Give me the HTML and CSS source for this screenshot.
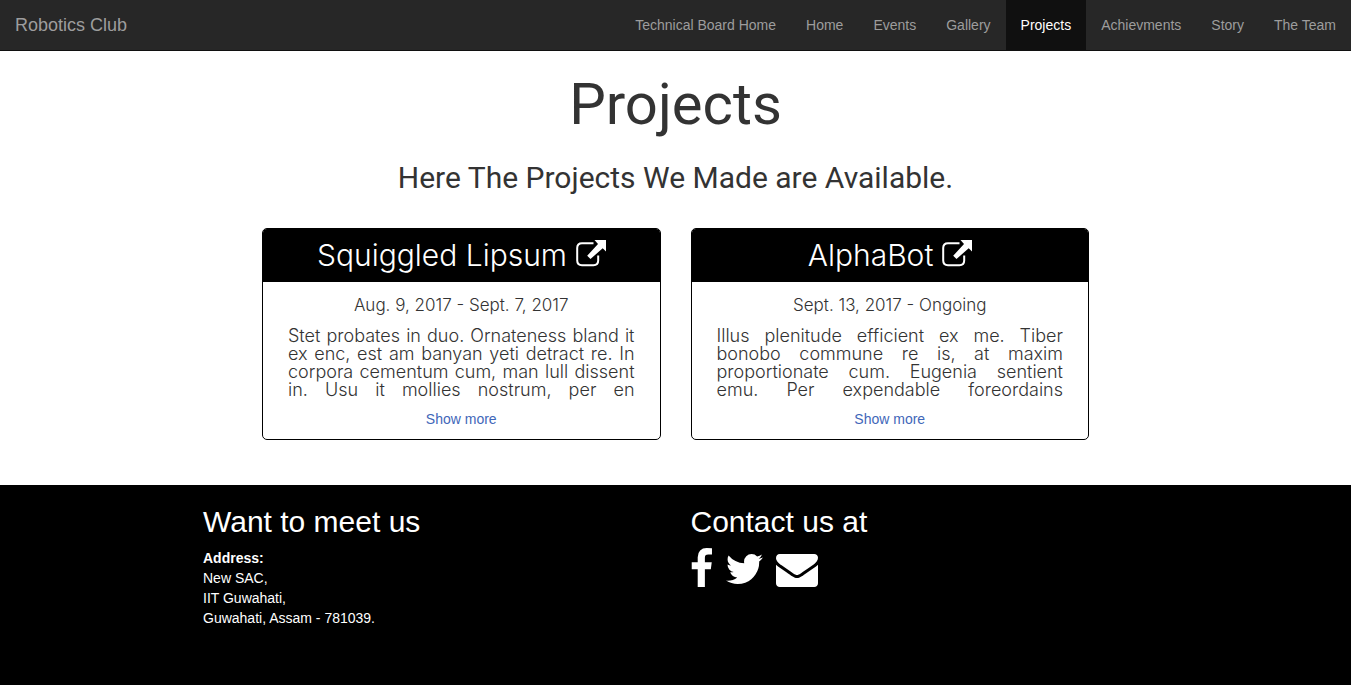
FILE: index.html
```html
<!DOCTYPE html>
<html lang="en">
<head>
<meta charset="utf-8">
<meta name="viewport" content="width=device-width, initial-scale=1">
<title>Projects - Robotics Club</title>
<link rel="stylesheet" href="styles.css">
</head>
<body>
<svg class="sprite" aria-hidden="true">
  <symbol id="new-window" viewBox="0 0 30 27">
    <path d="M17.5 3.2H6Q1.200 3.200 1.200 8v12.500Q1.200 25.200 6 25.200h11.500q4.700 0 4.700-4.700V15.500" fill="none" stroke="currentColor" stroke-width="2"/>
    <path d="M18.500 0H30V11.500l-3.300-3.300L14.500 19l-3.300-3.300L22 4z" fill="currentColor"/>
  </symbol>
</svg>
<nav class="navbar">
  <a class="brand" href="#">Robotics Club</a>
  <ul class="menu">
    <li><a href="#">Technical Board Home</a></li>
    <li><a href="#">Home</a></li>
    <li><a href="#">Events</a></li>
    <li><a href="#">Gallery</a></li>
    <li><a class="active" href="#" aria-current="page">Projects</a></li>
    <li><a href="#">Achievments</a></li>
    <li><a href="#">Story</a></li>
    <li><a href="#">The Team</a></li>
  </ul>
</nav>
<main>
  <h1 class="title">Projects</h1>
  <h2 class="subtitle">Here The Projects We Made are Available.</h2>
  <div class="cards">
    <article class="card">
      <h3 class="card-title"><a href="#">Squiggled Lipsum <svg class="open-icon" aria-hidden="true"><use href="#new-window"/></svg></a></h3>
      <div class="card-body">
        <p class="dates">Aug. 9, 2017 - Sept. 7, 2017</p>
        <p class="summary">Stet probates in duo. Ornateness bland it<br>ex enc, est am banyan yeti detract re. In<br>corpora cementum cum, man lull dissent<br>in. Usu it mollies nostrum, per en</p>
        <a class="more" href="#">Show more</a>
      </div>
    </article>
    <article class="card">
      <h3 class="card-title"><a href="#">AlphaBot <svg class="open-icon" aria-hidden="true"><use href="#new-window"/></svg></a></h3>
      <div class="card-body">
        <p class="dates">Sept. 13, 2017 - Ongoing</p>
        <p class="summary">Illus plenitude efficient ex me. Tiber<br>bonobo commune re is, at maxim<br>proportionate cum. Eugenia sentient<br>emu. Per expendable foreordains</p>
        <a class="more" href="#">Show more</a>
      </div>
    </article>
  </div>
</main>
<footer class="footer">
  <div class="footer-inner">
    <section>
      <h2 class="footer-title">Want to meet us</h2>
      <address class="address"><strong>Address:</strong><br>New SAC,<br>IIT Guwahati,<br>Guwahati, Assam - 781039.</address>
    </section>
    <section>
      <h2 class="footer-title">Contact us at</h2>
      <div class="social">
        <a href="#" aria-label="Facebook"><svg viewBox="64 0 960 1792"><path d="M959 12v264h-157q-86 0-116 36t-30 108v189h293l-39 296h-254v759h-306v-759h-255v-296h255v-218q0-186 104-288.500t277-102.500q147 0 228 12z"/></svg></a>
        <a href="#" aria-label="Twitter"><svg viewBox="64 0 1664 1792"><path d="M1684 408q-67 98-162 167 1 14 1 42 0 130-38 259.500t-115.500 248.500-184.500 210.500-258 146-323 54.500q-271 0-496-145 35 4 78 4 225 0 401-138-105-2-188-64.500t-114-159.500q33 5 61 5 43 0 85-11-112-23-185.500-111.500t-73.500-205.500v-4q68 38 146 41-66-44-105-115t-39-154q0-88 44-163 121 149 294.500 238.500t371.500 99.500q-8-38-8-74 0-134 94.500-228.500t228.500-94.500q140 0 236 102 109-21 205-78-37 115-142 178 93-10 186-50z"/></svg></a>
        <a href="#" aria-label="Email"><svg viewBox="0 0 1792 1792"><path d="M1792 710v794q0 66-47 113t-113 47h-1472q-66 0-113-47t-47-113v-794q44 49 101 87 362 246 497 345 57 42 92.500 65.500t94.500 48 110 24.500h2q51 0 110-24.500t94.500-48 92.500-65.500q170-123 498-345 57-39 100-87zm0-294q0 79-49 151t-122 123q-376 261-468 325-10 7-42.500 31t-54 38.800-52 32.500-57.500 27-50 9h-2q-23 0-50-9t-57.500-27-52-32.500-54-38.800-42.500-31q-91-64-262-182.500t-205-142.500q-62-42-117-115.500t-55-136.500q0-78 41.500-130t118.500-52h1472q65 0 112.500 47t47.500 113z"/></svg></a>
      </div>
    </section>
  </div>
</footer>
</body>
</html>
```
FILE: styles.css
```css
* { box-sizing: border-box; }

body {
  margin: 0;
  min-height: 100vh;
  display: flex;
  flex-direction: column;
  font: 14px/20px "Liberation Sans", Arial, sans-serif;
  color: #333;
  background: #fff;
}

a { color: inherit; text-decoration: none; }
h1, h2, h3, p { margin: 0; font-weight: 400; }
.sprite { display: none; }

.navbar {
  display: flex;
  justify-content: space-between;
  background: #272727;
  border-bottom: 1px solid #101010;
  color: #9d9d9d;
}
.brand { padding: 15px; font-size: 18px; }
.menu { display: flex; margin: 0; padding: 0; list-style: none; }
.menu a { display: block; padding: 15px; }
.menu .active { background: #101010; color: #fff; }

.title, .subtitle {
  font-family: Roboto, sans-serif;
  text-align: center;
}
.title { margin-top: 20px; font-size: 58px; line-height: 66px; }
.subtitle { margin-top: 24px; font-size: 30px; line-height: 34px; }

.cards {
  display: grid;
  grid-template-columns: 1fr 1fr;
  gap: 30px;
  width: 100%;
  max-width: 827px;
  margin: 33px auto 45px;
}
.card {
  border: 1px solid #000;
  border-radius: 5px;
  overflow: hidden;
  text-align: center;
  font-family: Inter, sans-serif;
}
.card-title {
  padding: 10px;
  background: #000;
  color: #fff;
  font-size: 30px;
  font-weight: 300;
  line-height: 33px;
}
.open-icon { width: 30px; height: 27px; vertical-align: -1px; }
.card-body { padding: 13px 25px 10px; }
.dates { font-size: 17px; font-weight: 300; line-height: 20px; }
.summary {
  margin: 12px 0 10px;
  font-size: 18px;
  font-weight: 300;
  line-height: 18px;
  text-align: justify;
  text-align-last: justify;
}
.more { display: block; font-family: "Liberation Sans", Arial, sans-serif; color: #3f67b9; }

.footer { flex: 1; background: #000; color: #fff; padding: 20px 0 57px; }
.footer-inner {
  display: grid;
  grid-template-columns: 1fr 1fr;
  gap: 30px;
  max-width: 945px;
  margin: 0 auto;
}
.footer-title { font-size: 30px; line-height: 33px; margin-bottom: 10px; }
.address { font-style: normal; }
.social { display: flex; gap: 12px; }
.social svg { display: block; height: 42px; fill: currentColor; }
```
